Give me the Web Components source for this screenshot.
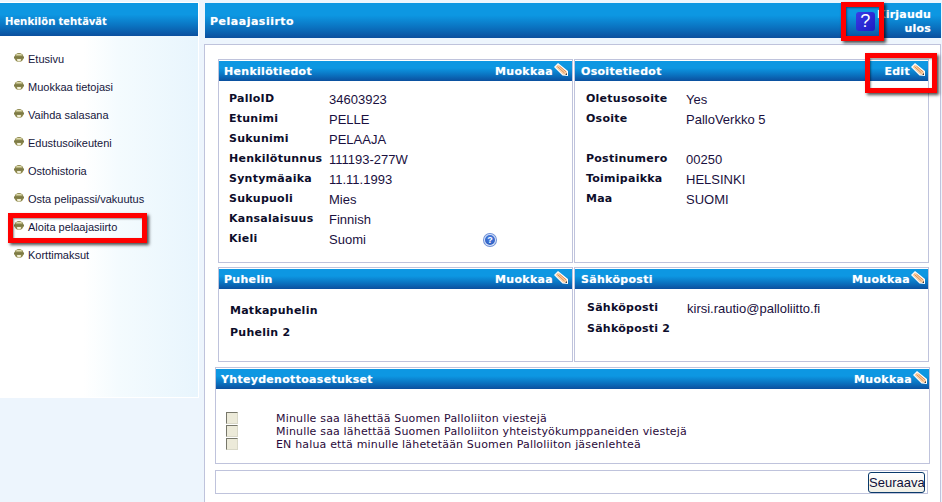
<!DOCTYPE html>
<html>
<head>
<meta charset="utf-8">
<title>Pelaajasiirto</title>
<style>
	html,body{margin:0; padding:0; background:#edf5fd; overflow:hidden;}
	body{width:942px; height:502px; position:relative; font-family:"Liberation Sans",Arial,sans-serif;}
	.page{display:grid; grid-template-columns:199px 1fr; column-gap:6px; height:502px;}
</style>
</head>
<body>
<template id="blue-bar"><style>
	:host{display:flex; align-items:center; justify-content:space-between; box-sizing:border-box; height:var(--bar-h,20px); padding:var(--bar-pad,0 4px 0 5px); background:linear-gradient(#0d97e2 0,#0d97e2 35%,#0a72c0 70%,#0b4f9e 100%); color:#fff; font:var(--bar-font,bold 11px "DejaVu Sans",Verdana,sans-serif); letter-spacing:var(--bar-ls,.3px); text-shadow:0 0 1px rgba(255,255,255,.45);}
	.right{display:flex; align-items:center;}
</style><span><slot></slot></span><span class="right"><slot name="right"></slot></span></template>

<template id="edit-link"><style>
	:host{display:inline-flex; align-items:center; gap:1px;}
	svg{display:block; margin-top:-3px;}
</style><slot></slot><svg width="14" height="13" viewBox="0 0 14 13">
	<path d="M0 4 L4 0 L14 8 L14 13 L8.5 12.5 Z" fill="#fff"/>
	<path d="M1.5 4 L4 1.5 L13 8.7 L13 11.8 L9 11.4 Z" fill="#f8cfa6"/>
	<path d="M3.5 3.6 L10.5 10 M5.5 3.2 L12 8.8" stroke="#e08f52" stroke-width="1" fill="none"/>
	<path d="M11.2 11.8 L13 12 L13 10 Z" fill="#333"/>
</svg></template>

<template id="side-nav"><style>
	:host{display:block; box-sizing:border-box; height:396px; margin-top:2px; border:solid #fff; border-width:1px 1px 1px 0;}
	.body{height:361px; box-sizing:border-box; padding-top:9px; background:linear-gradient(90deg,#fff 0,#fff 42%,#f4fbfe 60%,#e8f5fd 100%);}
	blue-bar{--bar-h:33px; --bar-pad:1px 6px 0 5px; --bar-font:bold 11px "Open Sans",Tahoma,sans-serif; --bar-ls:.1px;}
</style><blue-bar>Henkilön tehtävät</blue-bar><div class="body"><slot></slot></div></template>

<template id="nav-item"><style>
	:host{display:flex; align-items:center; height:28px; padding-left:14px; gap:4px; font:11px "Liberation Sans",Tahoma,sans-serif; color:#16163c;}
	svg{display:block; margin-top:-4px;}
</style><svg width="10" height="9" viewBox="0 0 10 9">
	<circle cx="5" cy="4.5" r="4.5" fill="#8f8a4e"/>
	<path d="M2.5 1 H7.5 L8 2.5 H2 Z" fill="#dcd9ac"/>
	<rect x="0" y="3.5" width="10" height="2" fill="#7d7a46"/>
	<path d="M3 6 H7 L6.5 8.5 H3.5 Z" fill="#f0eed6"/>
</svg><slot></slot></template>

<template id="info-card"><style>
	:host{display:block; box-sizing:border-box; border:1px solid #bfc3dc; padding-top:1px; background:#fff;}
	.content{display:block;}
</style><blue-bar><slot name="title"></slot><edit-link slot="right"><slot name="edit"></slot></edit-link></blue-bar><div class="content"><slot></slot></div></template>

<template id="info-rows"><style>
	:host{display:grid; grid-template-columns:var(--label-w,100px) 1fr; grid-auto-rows:var(--row-h,20px); padding:var(--rows-pad,8px 0 0 10px);}
</style><slot></slot></template>

<template id="info-label"><style>
	:host{display:block; font:bold 11px "DejaVu Sans",Verdana,sans-serif; letter-spacing:.25px; color:#0d0d2a; line-height:20px;}
</style><slot></slot></template>

<template id="info-value"><style>
	:host{display:block; font:13px "Liberation Sans",Arial,sans-serif; color:#1a1040; line-height:20px; padding-top:1px;}
</style><slot></slot></template>

<template id="check-row"><style>
	:host{display:flex; height:13px; align-items:center; font:11px "DejaVu Sans",Verdana,sans-serif; letter-spacing:.17px; color:#2a0a3a; line-height:13px;}
	i{display:block; box-sizing:border-box; width:12px; height:12px; margin:-1px 38px 0 0; background:#ecead9; border:1px solid; border-color:#77776a #d9d8c8 #d9d8c8 #77776a;}
</style><i></i><slot></slot></template>

<template id="mark-box"><style>
	:host{display:block; position:absolute; box-sizing:border-box; border:5px solid #f00; box-shadow:2px 2px 3px rgba(0,0,0,.7), inset 1px 1px 2px rgba(0,0,0,.45); pointer-events:none;}
</style></template>

<div class="page">
	<side-nav>
		<nav-item>Etusivu</nav-item>
		<nav-item>Muokkaa tietojasi</nav-item>
		<nav-item>Vaihda salasana</nav-item>
		<nav-item>Edustusoikeuteni</nav-item>
		<nav-item>Ostohistoria</nav-item>
		<nav-item>Osta pelipassi/vakuutus</nav-item>
		<nav-item>Aloita pelaajasiirto</nav-item>
		<nav-item>Korttimaksut</nav-item>
	</side-nav>
	<main-area></main-area>
</div>

<mark-box style="left:841px;top:2px;width:43px;height:39px"></mark-box>
<mark-box style="left:865px;top:53px;width:72px;height:40px"></mark-box>
<mark-box style="left:8px;top:213px;width:139px;height:30px"></mark-box>

<template id="main-area"><style>
	:host{display:block; padding-top:3px;}
	.head{--bar-h:35px; --bar-pad:2px 0 0 5px; --bar-ls:.5px; margin-right:1px;}
	.right{display:flex; align-items:center; gap:2px;}
	.q{display:flex; align-items:center; justify-content:center; width:19px; height:19px; border-radius:3px; background:linear-gradient(135deg,#3a3ae6,#1c1cc4); color:#fff; font:18px "Liberation Sans",Arial,sans-serif; text-shadow:none;}
	.out{width:64px; box-sizing:border-box; text-align:right; letter-spacing:.2px; line-height:14px; padding-right:10px;}
	.panel{box-sizing:border-box; margin:6px 1px 0 -1px; height:460px; background:#fff; border:1px solid #bfc3dc; border-bottom:0; padding:14px 0 0 13px;}
	.grid{display:grid; grid-template-columns:355px 355px; column-gap:1px; row-gap:4px; width:711px;}
	.top{height:204px;}
	.mid{height:95px;}
	.col2{--bar-pad:0 3px 0 6px;}
	.wide{--bar-pad:0 2px 0 5px; margin:5px 0 0 -3px; width:715px; height:97px;}
	.foot{box-sizing:border-box; margin:6px 0 0 -3px; width:713px; height:24px; border:1px solid #bfc3dc; display:flex; justify-content:flex-end; align-items:center; padding-right:2px;}
	button{box-sizing:border-box; width:57px; height:21px; padding:0; border:1px solid #0a3a6a; border-radius:3px; background:linear-gradient(#fff,#f0efe6); font:13px "Liberation Sans",Arial,sans-serif; color:#10103a;}
	.rel{position:relative;}
	.hint{display:block; position:absolute; left:265px; top:153px; width:12px; height:12px; border-radius:50%; background:radial-gradient(circle at 50% 35%,#4a7fe0,#2350b4); box-shadow:inset 0 0 0 1px #dfe9fb, 0 0 0 1px #6d8fd6; color:#fff; font:bold 9px/12px "Liberation Sans",Arial,sans-serif; text-align:center;}
	.checks{padding:23px 0 0 10px;}
	.r2{--rows-pad:8px 0 0 11px;}
	.ph{--row-h:22px; --rows-pad:12px 0 0 11px;}
	.em{--row-h:21px; --rows-pad:9px 0 0 12px;}
</style>
<blue-bar class="head">Pelaajasiirto<span class="right" slot="right"><span class="q">?</span><span class="out">Kirjaudu ulos</span></span></blue-bar>
<div class="panel">
	<div class="grid">
		<info-card class="top">
			<span slot="title">Henkilötiedot</span><span slot="edit">Muokkaa</span>
			<div class="rel">
			<info-rows>
				<info-label>PalloID</info-label><info-value>34603923</info-value>
				<info-label>Etunimi</info-label><info-value>PELLE</info-value>
				<info-label>Sukunimi</info-label><info-value>PELAAJA</info-value>
				<info-label>Henkilötunnus</info-label><info-value>111193-277W</info-value>
				<info-label>Syntymäaika</info-label><info-value>11.11.1993</info-value>
				<info-label>Sukupuoli</info-label><info-value>Mies</info-value>
				<info-label>Kansalaisuus</info-label><info-value>Finnish</info-value>
				<info-label>Kieli</info-label><info-value>Suomi</info-value>
			</info-rows>
			<span class="hint">?</span>
			</div>
		</info-card>
		<info-card class="top col2">
			<span slot="title">Osoitetiedot</span><span slot="edit">Edit</span>
			<info-rows class="r2">
				<info-label>Oletusosoite</info-label><info-value>Yes</info-value>
				<info-label>Osoite</info-label><info-value>PalloVerkko 5</info-value>
				<info-label></info-label><info-value></info-value>
				<info-label>Postinumero</info-label><info-value>00250</info-value>
				<info-label>Toimipaikka</info-label><info-value>HELSINKI</info-value>
				<info-label>Maa</info-label><info-value>SUOMI</info-value>
			</info-rows>
		</info-card>
		<info-card class="mid">
			<span slot="title">Puhelin</span><span slot="edit">Muokkaa</span>
			<info-rows class="ph">
				<info-label>Matkapuhelin</info-label><info-value></info-value>
				<info-label>Puhelin 2</info-label><info-value></info-value>
			</info-rows>
		</info-card>
		<info-card class="mid col2">
			<span slot="title">Sähköposti</span><span slot="edit">Muokkaa</span>
			<info-rows class="em">
				<info-label>Sähköposti</info-label><info-value>kirsi.rautio@palloliitto.fi</info-value>
				<info-label>Sähköposti 2</info-label><info-value></info-value>
			</info-rows>
		</info-card>
	</div>
	<info-card class="wide">
		<span slot="title">Yhteydenottoasetukset</span><span slot="edit">Muokkaa</span>
		<div class="checks">
			<check-row>Minulle saa lähettää Suomen Palloliiton viestejä</check-row>
			<check-row>Minulle saa lähettää Suomen Palloliiton yhteistyökumppaneiden viestejä</check-row>
			<check-row>EN halua että minulle lähetetään Suomen Palloliiton jäsenlehteä</check-row>
		</div>
	</info-card>
	<div class="foot"><button>Seuraava</button></div>
</div></template>

<script>
	// every element just clones its template into an open shadow root
	function define(name){
		customElements.define(name, class extends HTMLElement {
			constructor() {
				super();
				this.attachShadow({mode: 'open'}).appendChild(document.querySelector('#'+name).content.cloneNode(true));
			}
		});
	}
	['blue-bar','edit-link','side-nav','nav-item','info-card','info-rows','info-label','info-value','check-row','mark-box','main-area'].forEach(define);
</script>
</body>
</html>
